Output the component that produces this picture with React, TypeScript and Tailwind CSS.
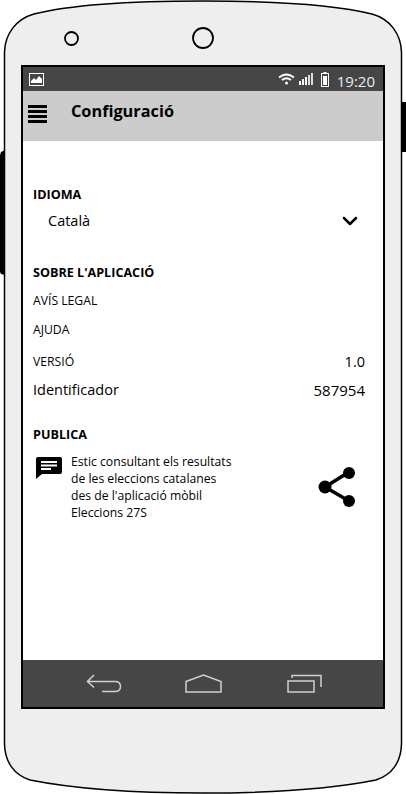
import { ChevronDown } from "lucide-react";

const font = "font-['Open_Sans','Noto_Sans',sans-serif]";

function PhoneBody() {
  return (
    <svg className="absolute left-0 top-0" width="406" height="794" viewBox="0 0 406 794">
      <path
        d="M203 1 C130 1 70 5 34 14 C16 19 5 34 4.500 52 L4.500 744 C5 762 14 775 30 780 C70 788 130 793 203 793 C276 793 336 788 376 780 C392 775 401 762 401.500 744 L401.500 52 C401 34 390 19 372 14 C336 5 276 1 203 1 Z"
        fill="#eeeeee"
        stroke="#000"
        strokeWidth="1.500"
      />
      <path d="M401 102 L406 102 L406 152 L401 152 Z" fill="#000" />
      <path d="M5 150 L1 152 L0 155 L0 272 L1 274 L5 275 Z" fill="#000" />
      <circle cx="71.500" cy="38.500" r="6.500" fill="none" stroke="#000" strokeWidth="1.800" />
      <circle cx="203" cy="38" r="10" fill="none" stroke="#000" strokeWidth="1.800" />
    </svg>
  );
}

function StatusBar() {
  return (
    <div className="flex h-6 items-center justify-between bg-[#464646] pl-[6px] pr-[8px]">
      <svg className="mt-[1px]" width="15" height="13" viewBox="0 0 15 13">
        <rect x="0.500" y="0.500" width="14" height="12" fill="#464646" stroke="#fff" />
        <path d="M2 10 L2 8 L5 5 L7 7 L10 3 L13 6 L13 10 Z" fill="#fff" />
      </svg>
      <div className="flex items-center">
        <svg className="mt-[-1px]" width="17" height="12" viewBox="0 0 17 12">
          <path d="M1 4.500 Q8.500 -1.500 16 4.500" fill="none" stroke="#fff" strokeWidth="1.800" />
          <path d="M4 7 Q8.500 3.500 13 7" fill="none" stroke="#fff" strokeWidth="1.800" />
          <circle cx="8.500" cy="10" r="1.500" fill="#fff" />
        </svg>
        <svg className="ml-[4px] mt-[-1px]" width="14" height="12" viewBox="0 0 14 12">
          <rect x="0" y="8" width="2" height="4" fill="#fff" />
          <rect x="3" y="6" width="2" height="6" fill="#fff" />
          <rect x="6" y="4" width="2" height="8" fill="#fff" />
          <rect x="9" y="2" width="2" height="10" fill="#ddd" />
          <rect x="12" y="0" width="2" height="12" fill="#ddd" />
        </svg>
        <svg className="ml-[8px]" width="8" height="15" viewBox="0 0 8 15">
          <rect x="2.500" y="0" width="3" height="2" fill="#fff" />
          <rect x="0.500" y="1.500" width="7" height="13" fill="none" stroke="#fff" />
          <rect x="2" y="4" width="4" height="9" fill="#fff" />
        </svg>
        <span className={`ml-[8px] mt-[4px] text-[15px] leading-none text-[#e8eef5] ${font}`}>19:20</span>
      </div>
    </div>
  );
}

function AppBar() {
  return (
    <div className="flex h-[50px] items-start bg-[#cccccc] pl-[5px]">
      <div className="mt-[14px] flex w-[19px] flex-col gap-[2px]">
        <div className="h-[3px] bg-black" />
        <div className="h-[3px] bg-black" />
        <div className="h-[3px] bg-black" />
        <div className="h-[3px] bg-black" />
      </div>
      <h1 className={`ml-[24px] mt-[9px] text-[16.300px] font-bold leading-[22px] text-black ${font}`}>Configuració</h1>
    </div>
  );
}

function Heading({ children, className }: { children: React.ReactNode; className: string }) {
  return <h2 className={`text-[12.600px] font-bold leading-[18px] text-black ${className}`}>{children}</h2>;
}

function Content() {
  return (
    <div className={`flex-1 bg-white pl-[10px] pr-[18px] text-black ${font}`}>
      <Heading className="mt-[45px]">IDIOMA</Heading>
      <div className="mt-[7px] flex h-[20px] items-center justify-between pl-[15px]">
        <span className="text-[14.500px] leading-[20px]">Català</span>
        <ChevronDown className="mr-[3px]" size={24} strokeWidth={2.500} />
      </div>
      <Heading className="mt-[33px]">SOBRE L'APLICACIÓ</Heading>
      <p className="mt-[10px] text-[12.200px] leading-[18px]">AVÍS LEGAL</p>
      <p className="mt-[11px] text-[12.200px] leading-[18px]">AJUDA</p>
      <div className="mt-[14px] flex h-[18px] items-center justify-between">
        <span className="text-[12.200px]">VERSIÓ</span>
        <span className="text-[14.500px]">1.0</span>
      </div>
      <div className="mt-[9px] flex h-[20px] items-center justify-between">
        <span className="text-[14.500px]">Identificador</span>
        <span className="text-[15px]">587954</span>
      </div>
      <Heading className="mt-[26px]">PUBLICA</Heading>
      <div className="mt-[9px] flex items-start">
        <svg className="ml-[3px] mt-[4px] shrink-0" width="26" height="22" viewBox="0 0 26 22">
          <path d="M2 0 L24 0 Q26 0 26 2 L26 15 Q26 17 24 17 L6 17 L0 22 L0 2 Q0 0 2 0 Z" fill="#000" />
          <rect x="5" y="4" width="16" height="2" fill="#fff" />
          <rect x="5" y="7.500" width="16" height="2" fill="#fff" />
          <rect x="5" y="11" width="10" height="2" fill="#fff" />
        </svg>
        <p className="ml-[9px] w-[180px] text-[12.200px] leading-[17px]">
          Estic consultant els resultats
          <br />
          de les eleccions catalanes
          <br />
          des de l'aplicació mòbil
          <br />
          Eleccions 27S
        </p>
        <svg className="ml-auto mr-[8px] mt-[12px]" width="40" height="44" viewBox="0 0 40 44">
          <path d="M32 7 L8 22 L32 36" fill="none" stroke="#000" strokeWidth="3.500" />
          <circle cx="32" cy="8" r="6" fill="#000" />
          <circle cx="8" cy="22" r="6.500" fill="#000" />
          <circle cx="32" cy="36" r="6" fill="#000" />
        </svg>
      </div>
    </div>
  );
}

function NavBar() {
  return (
    <div className="flex h-[47px] items-center justify-center bg-[#464646] pb-[1px] pl-[2px]">
      <svg width="36" height="19" viewBox="0 0 36 19" fill="none" stroke="#d0d0d0" strokeWidth="1.500">
        <path d="M8 1 L1.500 7.500 L8 13.500" />
        <path d="M1.500 7.500 L29 7.500 Q34.500 7.500 34.500 12.500 Q34.500 17.500 29 17.500 L16 17.500" />
      </svg>
      <svg className="ml-[63px]" width="37" height="19" viewBox="0 0 37 19" fill="none" stroke="#d0d0d0" strokeWidth="1.500">
        <path d="M1 7.500 L18.500 1 L36 7.500 L36 18 L1 18 Z" />
      </svg>
      <svg className="ml-[65px]" width="35" height="19" viewBox="0 0 35 19" fill="none" stroke="#d0d0d0" strokeWidth="1.500">
        <rect x="1" y="7" width="26" height="11" />
        <path d="M5 4 L5 1.500 L34 1.500 L34 13" />
      </svg>
    </div>
  );
}

export default function App() {
  return (
    <div className="relative h-[794px] w-[406px] overflow-hidden bg-white pt-[65px]">
      <PhoneBody />
      <div className="relative ml-[21px] flex h-[644px] w-[364px] flex-col border-2 border-black">
        <StatusBar />
        <AppBar />
        <Content />
        <NavBar />
      </div>
    </div>
  );
}
